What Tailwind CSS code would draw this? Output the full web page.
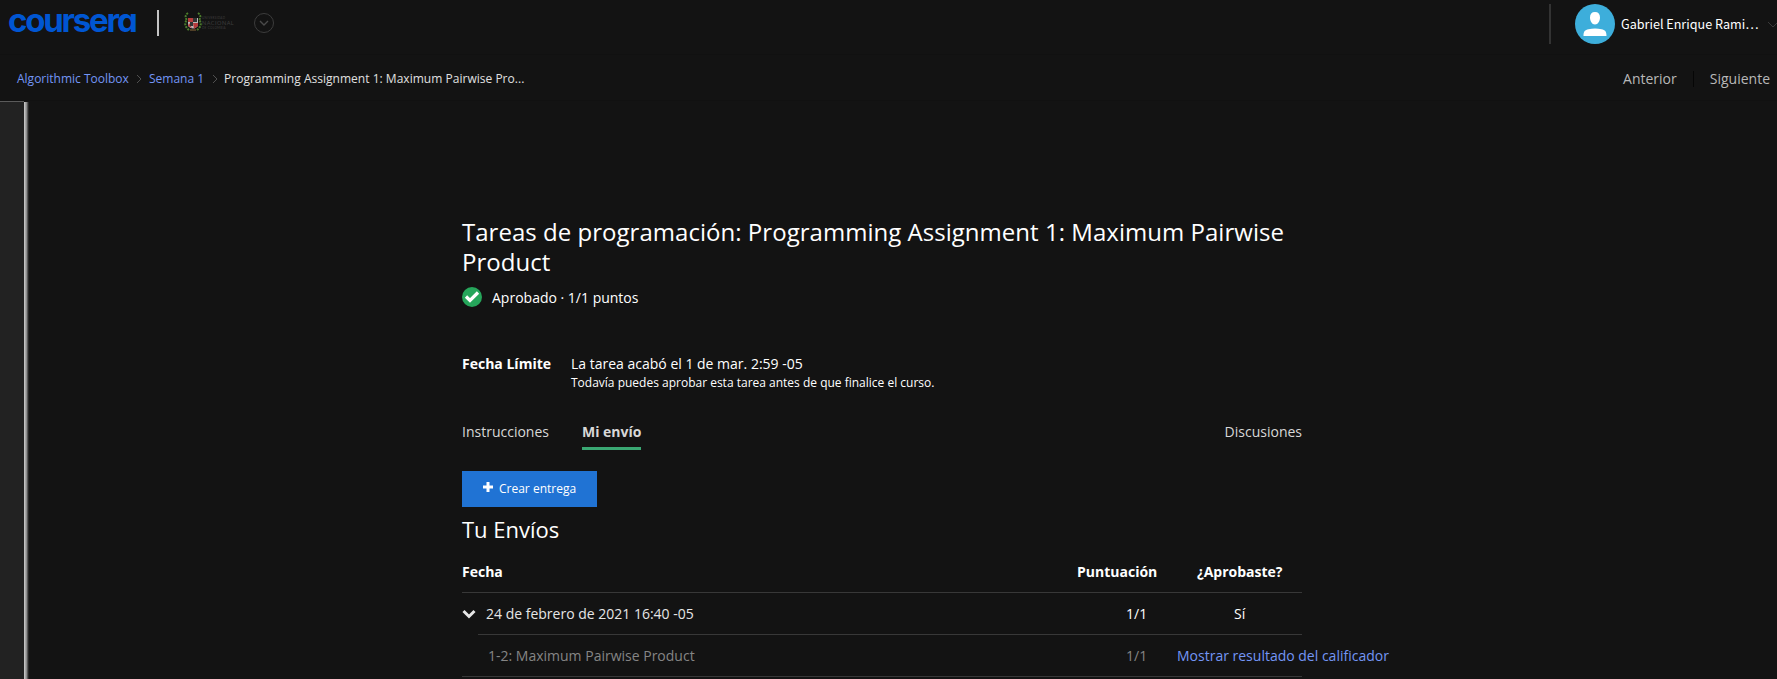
<!DOCTYPE html>
<html lang="es">
<head>
<meta charset="utf-8">
<title>Coursera</title>
<script src="https://cdn.jsdelivr.net/npm/@tailwindcss/browser@4"></script>
</head>
<body class="bg-[#131313] text-white font-['Open_Sans',sans-serif] text-[14px] leading-[21px] h-[679px] overflow-hidden flex flex-col">
<header class="h-[55px] shrink-0 flex items-start border-b border-[#111111]">
  <div class="ml-[8px] w-[129px] h-[46px] text-[#0056d2] font-['Inter',sans-serif] font-bold text-[33px] leading-[40px] tracking-[-2.200px] [font-feature-settings:'cv11'] whitespace-nowrap">coursera</div>
  <div class="ml-[20px] mt-[10px] w-[2px] h-[26px] bg-[#c4c4c4]"></div>
  <svg class="ml-[25px] mt-[12px]" width="18" height="20" viewBox="0 0 18 20" fill="none">
    <path d="M4 1C1 3 1 6 3 8C0 11 1 15 5 18M14 1C17 3 17 6 15 8C18 11 17 15 13 18" stroke="#4c7d2c" stroke-width="2" stroke-dasharray="2 1"/>
    <path d="M4 6h10v8q-5 5-10 0z" fill="#b9b9b9"/><path d="M4 6h5v4H4zM9 11h5v3l-4 3zM5 11l3 5-4-2z" fill="#b43c3c"/><path d="M9 6h4v4H9zM6 10h3v4H6z" fill="#333"/>
    <path d="M6 18h6" stroke="#8c6b3a"/>
  </svg>
  <div class="ml-0 mt-[16px] w-[34px] font-['Lato',sans-serif] text-[#3e3e3e] whitespace-nowrap">
    <div class="text-[3px] leading-[4px] tracking-[0.3px]">UNIVERSIDAD</div>
    <div class="text-[5.500px] leading-[7px] tracking-[0.500px]">NACIONAL</div>
    <div class="text-[3px] leading-[3px] tracking-[0.3px]">DE COLOMBIA</div>
  </div>
  <svg class="ml-[17px] mt-[12px]" width="22" height="22" viewBox="0 0 22 22" fill="none"><circle cx="11" cy="11" r="9.5" stroke="#3c3c3c"/><path d="M7 9l4 4 4-4" stroke="#4a4a4a" stroke-width="1.4"/></svg>
  <div class="ml-auto mt-[4px] w-[2px] h-[40px] bg-[#333333]"></div>
  <svg class="ml-[24px] mt-[4px]" width="40" height="40" viewBox="0 0 40 40"><circle cx="20" cy="20" r="20" fill="#3daedb"/><path fill="#fff" d="M20 8c3.300 0 5 2 5 5.500 0 3.500-2 7-5 7s-5-3.500-5-7C15 10 16.700 8 20 8zM8.500 32c0-5 1.500-6 5-6.800 4-1 9-1 13 0 3.500.8 5 1.800 5 6.800z"/></svg>
  <div class="ml-[6px] mt-[14px] w-[138px] text-[12.600px] leading-[20px] whitespace-nowrap font-['Noto_Sans_CJK_SC',sans-serif]">Gabriel Enrique Rami…</div>
  <svg class="ml-[9px] mt-[21px]" width="9" height="8" viewBox="0 0 9 8" fill="none"><path d="M0 1l5 5 5-5" stroke="#3a3a3a"/></svg>
</header>
<nav class="h-[46px] shrink-0 flex items-center border-b border-[#111111] pt-[2px] pl-[17px] pr-[7px] text-[12px] whitespace-nowrap">
  <a class="text-[#7396f5] w-[112px]">Algorithmic Toolbox</a>
  <svg class="ml-[7px]" width="6" height="10" viewBox="0 0 6 10" fill="none"><path d="M1 1l4 4-4 4" stroke="#505050"/></svg>
  <a class="ml-[7px] text-[#7396f5] w-[55px]">Semana 1</a>
  <svg class="ml-[8px]" width="6" height="10" viewBox="0 0 6 10" fill="none"><path d="M1 1l4 4-4 4" stroke="#505050"/></svg>
  <span class="ml-[6px] text-[#e0e0e0] tracking-[0.02px]">Programming Assignment 1: Maximum Pairwise Pro...</span>
  <span class="ml-auto text-[14px] text-[#b8b8b8]">Anterior</span>
  <span class="mx-[16px] w-px h-[16px] bg-[#060606]"></span>
  <span class="text-[14px] text-[#b8b8b8]">Siguiente</span>
</nav>
<div class="flex flex-1 min-h-0">
  <aside class="w-[29px] shrink-0 flex items-stretch">
    <div class="w-[24px] bg-[#222222] border-t border-[#5a5a5a]"></div>
    <div class="w-[5px] mt-px bg-linear-to-r from-[#d0d0d0] via-[#8c8c8c] to-[#131313]"></div>
  </aside>
  <main class="ml-[433px] w-[840px] pt-[116px]">
    <h1 class="text-[24px] leading-[30px] tracking-[0.03px] whitespace-nowrap">Tareas de programación: Programming Assignment 1: Maximum Pairwise<br>Product</h1>
    <div class="mt-[9px] flex items-start h-[22px]">
      <svg class="mt-px" width="20" height="20" viewBox="0 0 20 20"><circle cx="10" cy="10" r="10" fill="#26a65b"/><path d="M4 9.500l4 4 8-8" fill="none" stroke="#fff" stroke-width="3.200"/></svg>
      <span class="ml-[10px] mt-px">Aprobado · 1/1 puntos</span>
    </div>
    <div class="mt-[45px] flex h-[42px] whitespace-nowrap">
      <b class="w-[109px]">Fecha Límite</b>
      <div><div class="h-[21px]">La tarea acabó el 1 de mar. 2:59 -05</div><div class="text-[12px] leading-[18px]">Todavía puedes aprobar esta tarea antes de que finalice el curso.</div></div>
    </div>
    <div class="mt-[26px] flex h-[29px] text-[#d8d8d8]">
      <span>Instrucciones</span>
      <b class="ml-[33px] border-b-[3px] border-[#3aa873]">Mi envío</b>
      <span class="ml-auto">Discusiones</span>
    </div>
    <button class="mt-[21px] w-[135px] h-[36px] bg-[#2073d4] flex items-center pl-[21px] pb-[2px] text-[12px] whitespace-nowrap">
      <svg class="-mt-[2px]" width="10" height="10" viewBox="0 0 10 10"><path d="M5 0v10M0 5h10" stroke="#fff" stroke-width="3"/></svg>
      <span class="ml-[6px]">Crear entrega</span>
    </button>
    <h2 class="mt-[7px] text-[22px] leading-[30px]">Tu Envíos</h2>
    <div class="mt-[7px] flex h-[42px] items-center border-b border-[#383838] font-bold">
      <span class="w-[600px]">Fecha</span><span class="w-[110px] pl-[15px]">Puntuación</span><span class="w-[130px] pl-[25px]">¿Aprobaste?</span>
    </div>
    <div class="flex h-[41px] items-center text-[#e6e6e6]">
      <svg width="14" height="10" viewBox="0 0 14 10" fill="none"><path d="M1.500 2L7 7.500l5.500-5.500" stroke="#e6e6e6" stroke-width="3"/></svg>
      <span class="ml-[10px] w-[640px]">24 de febrero de 2021 16:40 -05</span><span class="w-[108px] text-white">1/1</span><span class="text-white">Sí</span>
    </div>
    <div class="h-[43px] border-b border-[#383838] pl-[16px]">
      <div class="flex h-[42px] items-center border-t border-[#383838] text-[#858585] whitespace-nowrap">
        <span class="ml-[10px] w-[638px] shrink-0">1-2: Maximum Pairwise Product</span><span class="w-[51px] shrink-0">1/1</span><a class="text-[#7396f5]">Mostrar resultado del calificador</a>
      </div>
    </div>
  </main>
</div>
</body>
</html>
